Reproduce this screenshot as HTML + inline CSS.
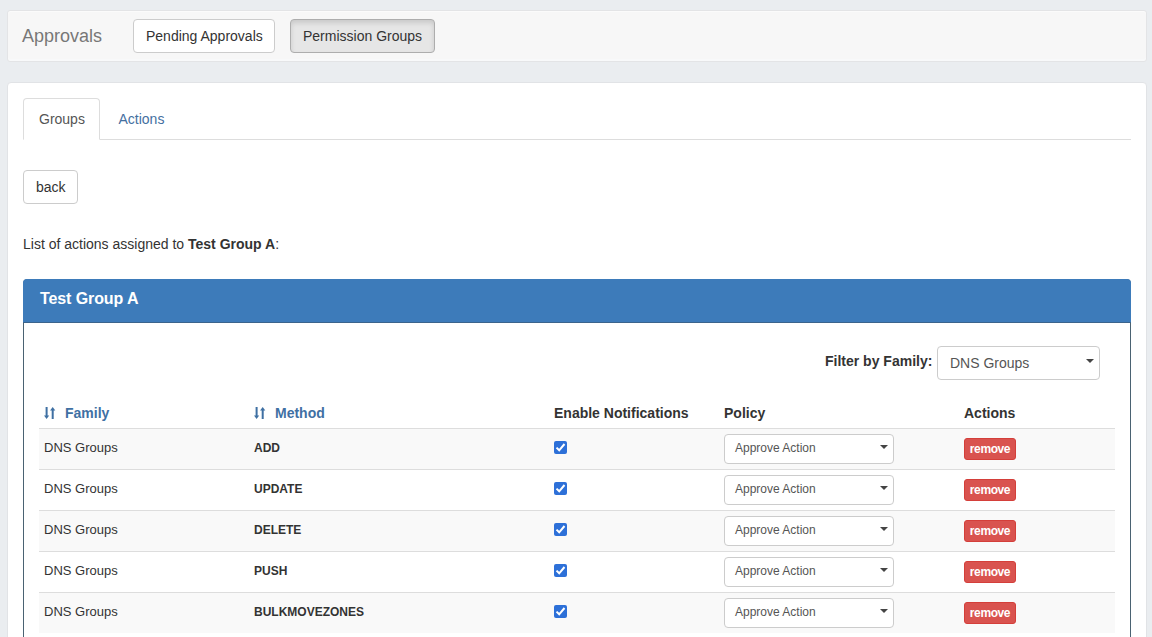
<!DOCTYPE html>
<html><head><meta charset="utf-8">
<style>
*{box-sizing:border-box;}
html,body{margin:0;padding:0;}
body{width:1152px;height:637px;overflow:hidden;background:#eaedf0;font-family:"Liberation Sans",sans-serif;font-size:14px;line-height:20px;color:#333;position:relative;}
.abs{position:absolute;}
.hdr{left:7px;top:10px;width:1140px;height:52px;background:#f7f7f7;border:1px solid #e3e4e6;border-radius:3px;box-shadow:inset 0 1px 0 #fbfbfb,inset 0 -2px 0 #f8f9fa;}
.title{left:22px;top:26px;font-size:18px;line-height:20px;color:#777;white-space:nowrap;}
.btn{position:absolute;height:34px;padding:6px 12px;border:1px solid #ccc;border-radius:4px;background:#fff;color:#333;white-space:nowrap;font-size:14px;line-height:20px;}
.btn.active{background:#e6e6e6;border-color:#adadad;box-shadow:inset 0 3px 5px rgba(0,0,0,.125);}
.main{left:7px;top:82px;width:1140px;height:600px;background:#fff;border:1px solid #e1e3e6;border-radius:4px;}
.tabline{left:23px;top:139px;width:1108px;height:1px;background:#ddd;}
.tab{left:23px;top:98px;width:77px;height:42px;background:#fff;border:1px solid #ddd;border-bottom-color:#fff;border-radius:4px 4px 0 0;padding:10px 15px;color:#555;}
.tablink{left:118.5px;top:109px;color:#44709f;}
.listtxt{left:23px;top:234px;white-space:nowrap;}
.panel{left:23px;top:279px;width:1108px;height:420px;border:1px solid #4a6272;border-radius:4px;background:#fff;}
.phead{left:23px;top:279px;width:1108px;height:44px;background:#3d7bba;border-radius:4px 4px 0 0;border-bottom:1px solid #3b648c;}
.ptitle{left:40px;top:289px;font-size:16px;font-weight:bold;color:#fff;white-space:nowrap;letter-spacing:-0.1px;}
.flabel{left:825px;top:351px;font-weight:bold;white-space:nowrap;}
.sel{position:absolute;background:#fff;border:1px solid #ccc;border-radius:4px;color:#555;white-space:nowrap;}
.caret{position:absolute;width:0;height:0;border-left:4px solid transparent;border-right:4px solid transparent;border-top:4px solid #444;}
.th{position:absolute;top:403px;font-weight:bold;white-space:nowrap;}
.th.link{color:#3f70a3;}
.sort{position:absolute;top:4px;left:0;width:12px;height:12px;}
.row{position:absolute;left:39px;width:1076px;height:41px;border-top:1px solid #ddd;}
.row.odd{background:#f9f9f9;}
.cell{position:absolute;white-space:nowrap;}
.fam{left:5px;top:9px;font-size:13px;}
.meth{left:215px;top:9px;font-size:12px;font-weight:bold;}
.cb{position:absolute;left:515px;top:12px;width:13px;height:13px;}
.cb svg{display:block;}
.rm{position:absolute;left:925px;top:9px;width:52px;height:22px;background:#d9534f;border:1px solid #d43f3a;border-radius:3px;color:#fff;font-size:12px;font-weight:bold;line-height:20px;text-align:center;letter-spacing:-0.4px;}
</style></head>
<body>
<div class="abs hdr"></div>
<div class="abs title">Approvals</div>
<div class="btn" style="left:133px;top:19px;width:142px;">Pending Approvals</div>
<div class="btn active" style="left:290px;top:19px;width:145px;">Permission Groups</div>

<div class="abs main"></div>
<div class="abs tabline"></div>
<div class="abs tab">Groups</div>
<div class="abs tablink">Actions</div>
<div class="btn" style="left:23px;top:170px;width:55px;">back</div>
<div class="abs listtxt">List of actions assigned to <b>Test Group A</b>:</div>

<div class="abs panel"></div>
<div class="abs phead"></div>
<div class="abs ptitle">Test Group A</div>
<div class="abs flabel">Filter by Family:</div>
<div class="sel" style="left:937px;top:346px;width:163px;height:34px;padding:6px 12px;font-size:14px;line-height:20px;">DNS Groups<span class="caret" style="left:148px;top:12px;"></span></div>

<div class="th link" style="left:44px;width:80px;"><svg class="sort" viewBox="0 0 12 12"><rect x="1.6" y="0" width="2" height="9" fill="currentColor"/><polygon points="0,8.6 5.2,8.6 2.6,12" fill="currentColor"/><rect x="7.7" y="3" width="2" height="9" fill="currentColor"/><polygon points="6.1,3.4 11.3,3.4 8.7,0" fill="currentColor"/></svg><span style="position:absolute;left:21px;">Family</span></div>
<div class="th link" style="left:254px;width:80px;"><svg class="sort" viewBox="0 0 12 12"><rect x="1.6" y="0" width="2" height="9" fill="currentColor"/><polygon points="0,8.6 5.2,8.6 2.6,12" fill="currentColor"/><rect x="7.7" y="3" width="2" height="9" fill="currentColor"/><polygon points="6.1,3.4 11.3,3.4 8.7,0" fill="currentColor"/></svg><span style="position:absolute;left:21px;">Method</span></div>
<div class="th" style="left:554px;">Enable Notifications</div>
<div class="th" style="left:724px;">Policy</div>
<div class="th" style="left:964px;">Actions</div>

<div class="row odd" style="top:428px;">
<div class="cell fam">DNS Groups</div>
<div class="cell meth">ADD</div>
<div class="cb"><svg viewBox="0 0 13 13" width="13" height="13"><rect x="0" y="0" width="13" height="13" rx="2" fill="#2d70d8"/><polyline points="2.5,6.6 5.2,9.3 10.5,3" fill="none" stroke="#fff" stroke-width="2"/></svg></div>
<div class="sel" style="left:685px;top:5px;width:170px;height:30px;padding:4px 10px;font-size:12px;line-height:18px;">Approve Action<span class="caret" style="left:155px;top:10px;"></span></div>
<div class="rm">remove</div>
</div>
<div class="row" style="top:469px;">
<div class="cell fam">DNS Groups</div>
<div class="cell meth">UPDATE</div>
<div class="cb"><svg viewBox="0 0 13 13" width="13" height="13"><rect x="0" y="0" width="13" height="13" rx="2" fill="#2d70d8"/><polyline points="2.5,6.6 5.2,9.3 10.5,3" fill="none" stroke="#fff" stroke-width="2"/></svg></div>
<div class="sel" style="left:685px;top:5px;width:170px;height:30px;padding:4px 10px;font-size:12px;line-height:18px;">Approve Action<span class="caret" style="left:155px;top:10px;"></span></div>
<div class="rm">remove</div>
</div>
<div class="row odd" style="top:510px;">
<div class="cell fam">DNS Groups</div>
<div class="cell meth">DELETE</div>
<div class="cb"><svg viewBox="0 0 13 13" width="13" height="13"><rect x="0" y="0" width="13" height="13" rx="2" fill="#2d70d8"/><polyline points="2.5,6.6 5.2,9.3 10.5,3" fill="none" stroke="#fff" stroke-width="2"/></svg></div>
<div class="sel" style="left:685px;top:5px;width:170px;height:30px;padding:4px 10px;font-size:12px;line-height:18px;">Approve Action<span class="caret" style="left:155px;top:10px;"></span></div>
<div class="rm">remove</div>
</div>
<div class="row" style="top:551px;">
<div class="cell fam">DNS Groups</div>
<div class="cell meth">PUSH</div>
<div class="cb"><svg viewBox="0 0 13 13" width="13" height="13"><rect x="0" y="0" width="13" height="13" rx="2" fill="#2d70d8"/><polyline points="2.5,6.6 5.2,9.3 10.5,3" fill="none" stroke="#fff" stroke-width="2"/></svg></div>
<div class="sel" style="left:685px;top:5px;width:170px;height:30px;padding:4px 10px;font-size:12px;line-height:18px;">Approve Action<span class="caret" style="left:155px;top:10px;"></span></div>
<div class="rm">remove</div>
</div>
<div class="row odd" style="top:592px;">
<div class="cell fam">DNS Groups</div>
<div class="cell meth">BULKMOVEZONES</div>
<div class="cb"><svg viewBox="0 0 13 13" width="13" height="13"><rect x="0" y="0" width="13" height="13" rx="2" fill="#2d70d8"/><polyline points="2.5,6.6 5.2,9.3 10.5,3" fill="none" stroke="#fff" stroke-width="2"/></svg></div>
<div class="sel" style="left:685px;top:5px;width:170px;height:30px;padding:4px 10px;font-size:12px;line-height:18px;">Approve Action<span class="caret" style="left:155px;top:10px;"></span></div>
<div class="rm">remove</div>
</div>
</body></html>
